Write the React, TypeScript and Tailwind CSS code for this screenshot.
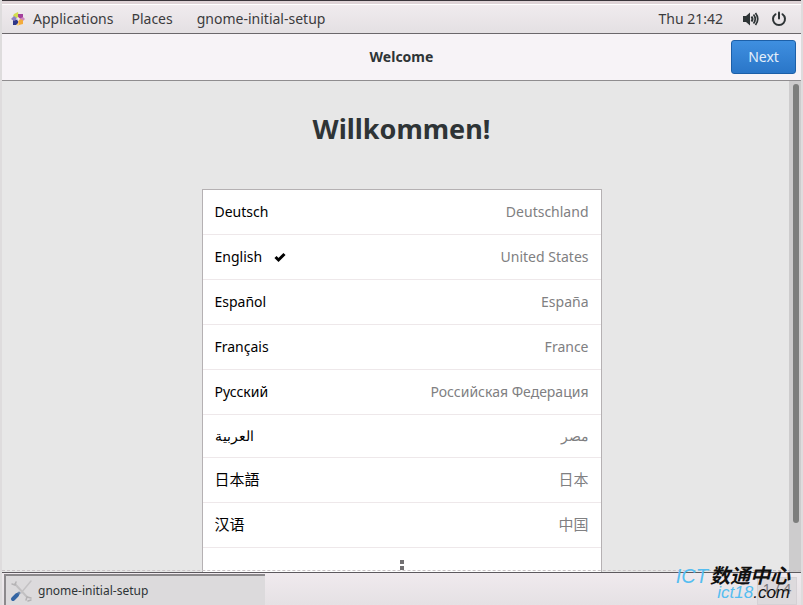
import { useState } from "react";

interface Language {
  name: string;
  country: string;
  row: string;
}

const languages: Language[] = [
  { name: "Deutsch", country: "Deutschland", row: "h-[45px]" },
  { name: "English", country: "United States", row: "h-[45px]" },
  { name: "Español", country: "España", row: "h-[45px]" },
  { name: "Français", country: "France", row: "h-[45px]" },
  { name: "Русский", country: "Российская Федерация", row: "h-[45px]" },
  { name: "العربية", country: "مصر", row: "h-[43px]" },
  { name: "日本語", country: "日本", row: "h-[45px] text-[15px]" },
  { name: "汉语", country: "中国", row: "h-[45px] text-[15px]" },
];

function DistroLogo() {
  return (
    <svg className="h-4 w-4" viewBox="0 0 16 16" aria-hidden="true">
      <path d="M4 3l4-2 1 6-2 1-4-3z" fill="#d3dc4f" />
      <path d="M8 3h5v4l-3 1-2-2z" fill="#a33f9d" />
      <path d="M13 6l2 2-2 2-4-2z" fill="#cf86bd" />
      <path d="M9 8l4 1v4l-4 1-1-3z" fill="#f3ab3c" />
      <path d="M8 10l1 4-1 1-2-2z" fill="#f7d17a" />
      <path d="M3 9l5-1v4l-2 2H3z" fill="#2f3789" />
      <path d="M1 8l3-3 4 3-4 2z" fill="#8c7fc4" />
      <path d="M8 6v4M6 8h4" stroke="#f4eef2" strokeWidth="1" />
    </svg>
  );
}

function VolumeIcon() {
  return (
    <svg className="h-4 w-4" viewBox="0 0 16 16" fill="none" stroke="#2e3436" strokeWidth="2" aria-hidden="true">
      <path d="M0 5h3l4-3.500v13L3 11H0z" fill="#2e3436" stroke="none" />
      <path d="M8.500 5.500q2 2.500 0 5" />
      <path d="M10.500 3.500q3.500 4.500 0 9" strokeWidth="1.700" />
      <path d="M12.500 2q4.500 6 0 12" strokeWidth="1.700" />
    </svg>
  );
}

function PowerIcon() {
  return (
    <svg className="h-4 w-4" viewBox="0 0 16 16" fill="none" stroke="#2e3436" strokeWidth="2" strokeLinecap="round" aria-hidden="true">
      <path d="M4.500 3.200a6 6 0 1 0 7 0" />
      <path d="M8 1.500v6" />
    </svg>
  );
}

function ToolsIcon() {
  return (
    <svg className="h-6 w-6" viewBox="0 0 24 24" fill="none" strokeLinecap="round" aria-hidden="true">
      <path d="M5 5l12 13" stroke="#c2c0c2" strokeWidth="2" />
      <path d="M2 5l3 1 1-3M16 21l1-3 4 1M18 22l3-1" stroke="#b5b3b5" strokeWidth="1.500" />
      <path d="M21 2l-10 12" stroke="#c4c2c4" strokeWidth="1.500" />
      <path d="M9 14l-2 2" stroke="#6d87a8" strokeWidth="3" />
      <path d="M7 16l-4 4" stroke="#3465a4" strokeWidth="4" />
    </svg>
  );
}

export default function App() {
  const [selected, setSelected] = useState("English");

  return (
    <div className="relative flex h-screen flex-col overflow-hidden border-x-2 border-[#dedcdd] bg-[#e7e7e7] font-['Noto_Sans','Noto_Sans_CJK_SC',sans-serif] text-sm text-[#2e3436]">
      <div className="h-1 shrink-0 border-t border-[#39353a] bg-[#ded3d6]" />
      <nav className="flex h-[30px] shrink-0 items-center border-t border-b border-t-white border-b-[#6b676b] bg-linear-to-b from-[#f0ebee] to-[#e4e0e3] pl-2 pr-3.5 text-[#3b3b3d]">
        <button type="button" className="flex items-center gap-[7px]">
          <DistroLogo />
          Applications
        </button>
        <button type="button" className="ml-[18px]">Places</button>
        <button type="button" className="ml-6">gnome-initial-setup</button>
        <button type="button" className="ml-auto">Thu 21:42</button>
        <button type="button" aria-label="Volume" className="ml-5">
          <VolumeIcon />
        </button>
        <button type="button" aria-label="Power" className="ml-3">
          <PowerIcon />
        </button>
      </nav>

      <header className="grid h-[47px] shrink-0 grid-cols-[1fr_auto_1fr] items-center border-b border-[#8f8d8f] bg-[#f7f3f7] px-[5px]">
        <h1 className="col-start-2 font-bold">Welcome</h1>
        <button
          type="button"
          className="h-[34px] w-[65px] justify-self-end rounded-[3px] border border-[#1c5fa8] bg-linear-to-b from-[#3f8fe0] to-[#2a76c8] text-[#e4effa]"
        >
          Next
        </button>
      </header>

      <div className="flex min-h-0 flex-1">
        <main className="min-w-0 flex-1 overflow-hidden pl-3">
          <h2 className="mt-7 text-center text-[27px] leading-10 font-bold">Willkommen!</h2>
          <ul className="mx-auto mt-10 w-[400px] border border-[#b5b1b3] bg-white text-black">
            {languages.map((l) => (
              <li key={l.name} className={`border-b border-[#eee8ea] ${l.row}`}>
                <button
                  type="button"
                  aria-pressed={l.name === selected}
                  onClick={() => setSelected(l.name)}
                  className="flex h-full w-full items-center px-3"
                >
                  <span>{l.name}</span>
                  {l.name === selected && (
                    <svg className="ml-3 h-3 w-3" viewBox="0 0 12 12" aria-hidden="true">
                      <path d="M1.500 6l3 3L10.500 3" fill="none" stroke="#000" strokeWidth="3" />
                    </svg>
                  )}
                  <span className="ml-auto text-[#808082]">{l.country}</span>
                </button>
              </li>
            ))}
            <li>
              <button type="button" aria-label="More languages" className="flex h-[45px] w-full flex-col items-center gap-0.5 pt-3">
                <span className="h-1 w-1 bg-[#727072]" />
                <span className="h-1 w-1 bg-[#727072]" />
                <span className="h-1 w-1 bg-[#727072]" />
              </button>
            </li>
          </ul>
        </main>
        <div className="w-3 shrink-0 bg-[#cdcccd] pt-[3px] pl-1">
          <div className="h-[90%] w-1.5 rounded-full bg-[#7d7e7d]" />
        </div>
      </div>

      <footer className="relative flex h-[33px] shrink-0 border-t border-[#5d595e] bg-linear-to-b from-[#f0eaee] to-[#e5e1e4] pl-0.5">
        {/* undershoot hint at the lower edge of the list */}
        <div className="absolute inset-x-0 -top-[3px] border-t border-dashed border-[#c9c3c6]" />
        <button
          type="button"
          className="mt-px flex w-[261px] items-center gap-1 border-t-2 border-l-2 border-[#8c898c] bg-[#dcdadc] pl-1"
        >
          <ToolsIcon />
          <span className="text-xs">gnome-initial-setup</span>
        </button>
        <span className="mt-1 mr-1 ml-auto w-10 border border-[#d5d1d5] bg-[#dddadd] pt-px text-center text-sm text-[#77757a]">
          1 / 4
        </span>
      </footer>

      {/* pointer at the screen edge */}
      <div className="absolute top-[384px] -right-0.5 h-3 w-0.5 bg-[#1a1a1a]" />

      <div className="absolute right-[11px] bottom-1 text-right font-['Liberation_Sans','Noto_Sans_CJK_SC',sans-serif] text-[#111] italic">
        <p className="text-xl leading-[18px]">
          <span className="text-[#55bdf0]">ICT</span>
          <span className="ml-0.5 font-bold">数通中心</span>
        </p>
        <p className="text-[17px] leading-4">
          <span className="text-[#55bdf0]">ict18</span>.com
        </p>
      </div>
    </div>
  );
}
